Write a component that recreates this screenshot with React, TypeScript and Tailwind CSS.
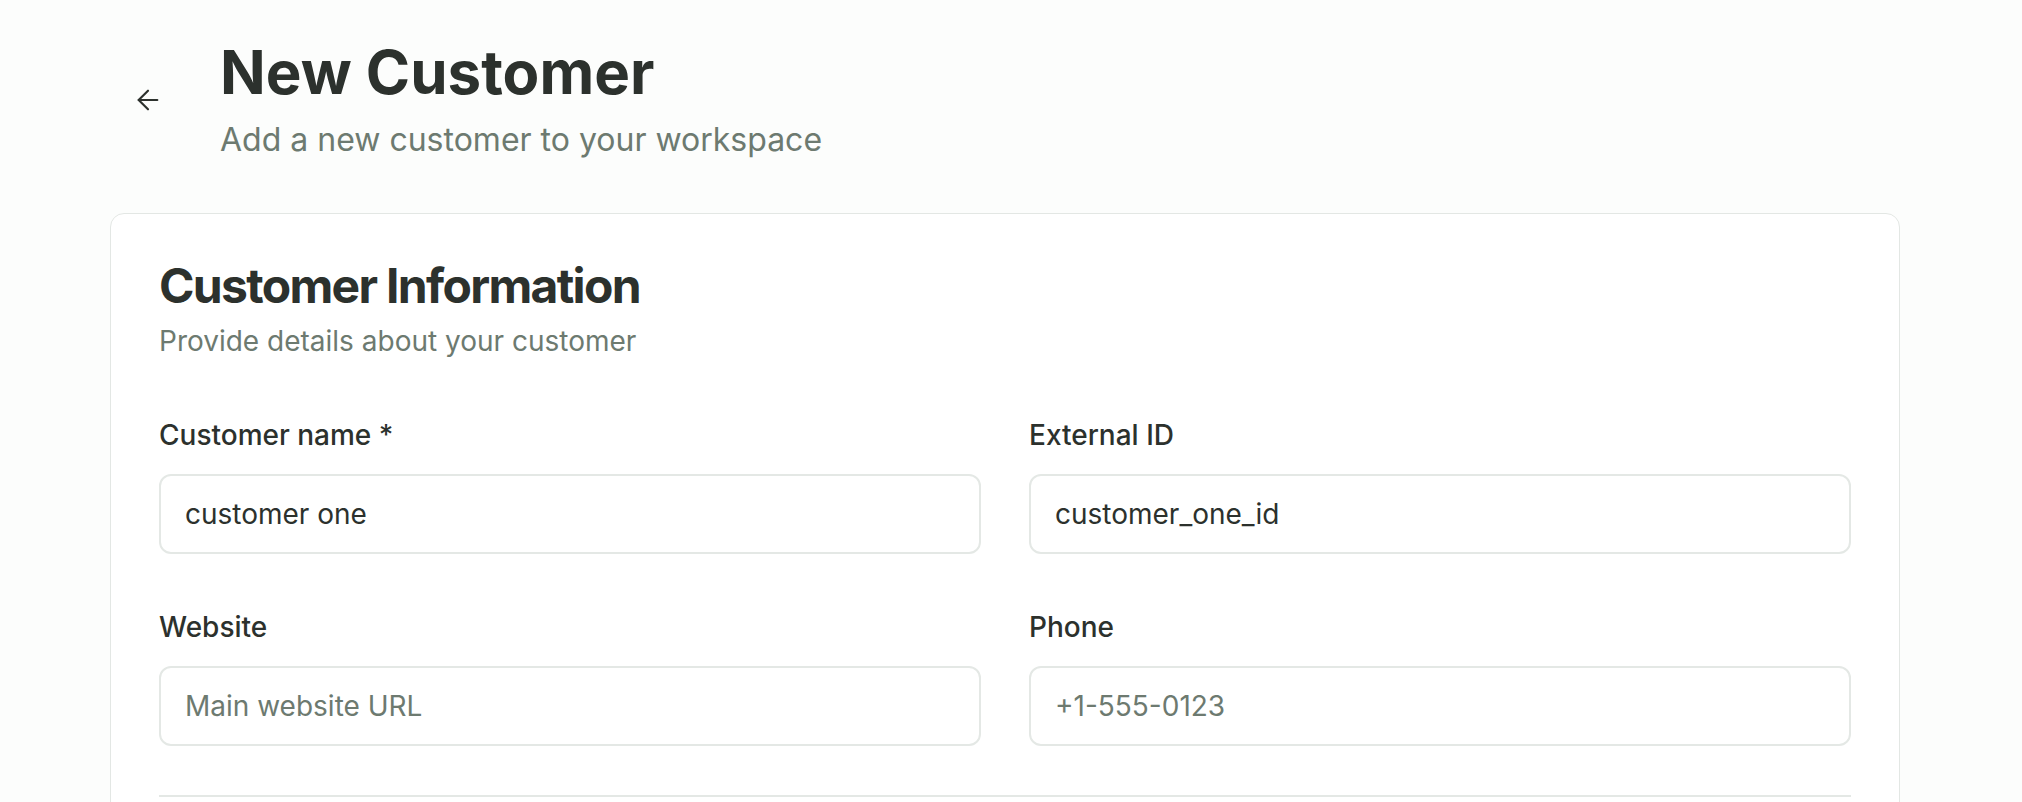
import React, { useState } from 'react';
import { ArrowLeft } from 'lucide-react';

function Field({
  label,
  value,
  placeholder,
}: {
  label: string;
  value?: string;
  placeholder?: string;
}) {
  const [text, setText] = useState(value ?? '');
  return (
    <div className="flex flex-col">
      <label className="text-[28px] leading-[36px] font-medium text-[#2c312d]">
        {label}
      </label>
      <input
        value={text}
        onChange={(e) => setText(e.target.value)}
        placeholder={placeholder}
        className="mt-[21px] h-[80px] w-full rounded-[12px] border-2 border-[#e4e8e5] bg-white px-6 text-[28px] text-[#2c312d] outline-none placeholder:text-[#6d7a70]"
      />
    </div>
  );
}

export default function App() {
  return (
    <div className="min-h-screen bg-[#fcfdfc] font-['Inter',sans-serif] pl-[110px] pr-[122px]">
      {/* Header */}
      <header className="flex items-center pt-[42px]">
        <button className="flex w-[110px] items-center pl-[22px] text-[#2c312d]">
          <ArrowLeft className="h-8 w-8" strokeWidth={1.6} />
        </button>
        <div>
          <h1 className="text-[60px] leading-none font-bold text-[#2c312d]">
            New Customer
          </h1>
          <p className="mt-[20px] text-[32px] leading-[36px] text-[#6d7a70]">
            Add a new customer to your workspace
          </p>
        </div>
      </header>

      {/* Card */}
      <section className="mt-[55px] rounded-[14px] border border-[#e3e7e4] bg-white px-12 pt-12 pb-10">
        <h2 className="text-[48px] leading-none font-bold tracking-[-0.035em] text-[#2c312d]">
          Customer Information
        </h2>
        <p className="mt-[13px] text-[28px] leading-[36px] text-[#6d7a70]">
          Provide details about your customer
        </p>

        <div className="mt-[58px] grid grid-cols-2 gap-x-12 gap-y-[55px]">
          <Field label="Customer name *" value="customer one" />
          <Field label="External ID" value="customer_one_id" />
          <Field label="Website" placeholder="Main website URL" />
          <Field label="Phone" placeholder="+1-555-0123" />
        </div>

        <div className="mt-[49px] border-t-2 border-[#e4e8e5]" />
        <div className="h-[200px]" />
      </section>
    </div>
  );
}
